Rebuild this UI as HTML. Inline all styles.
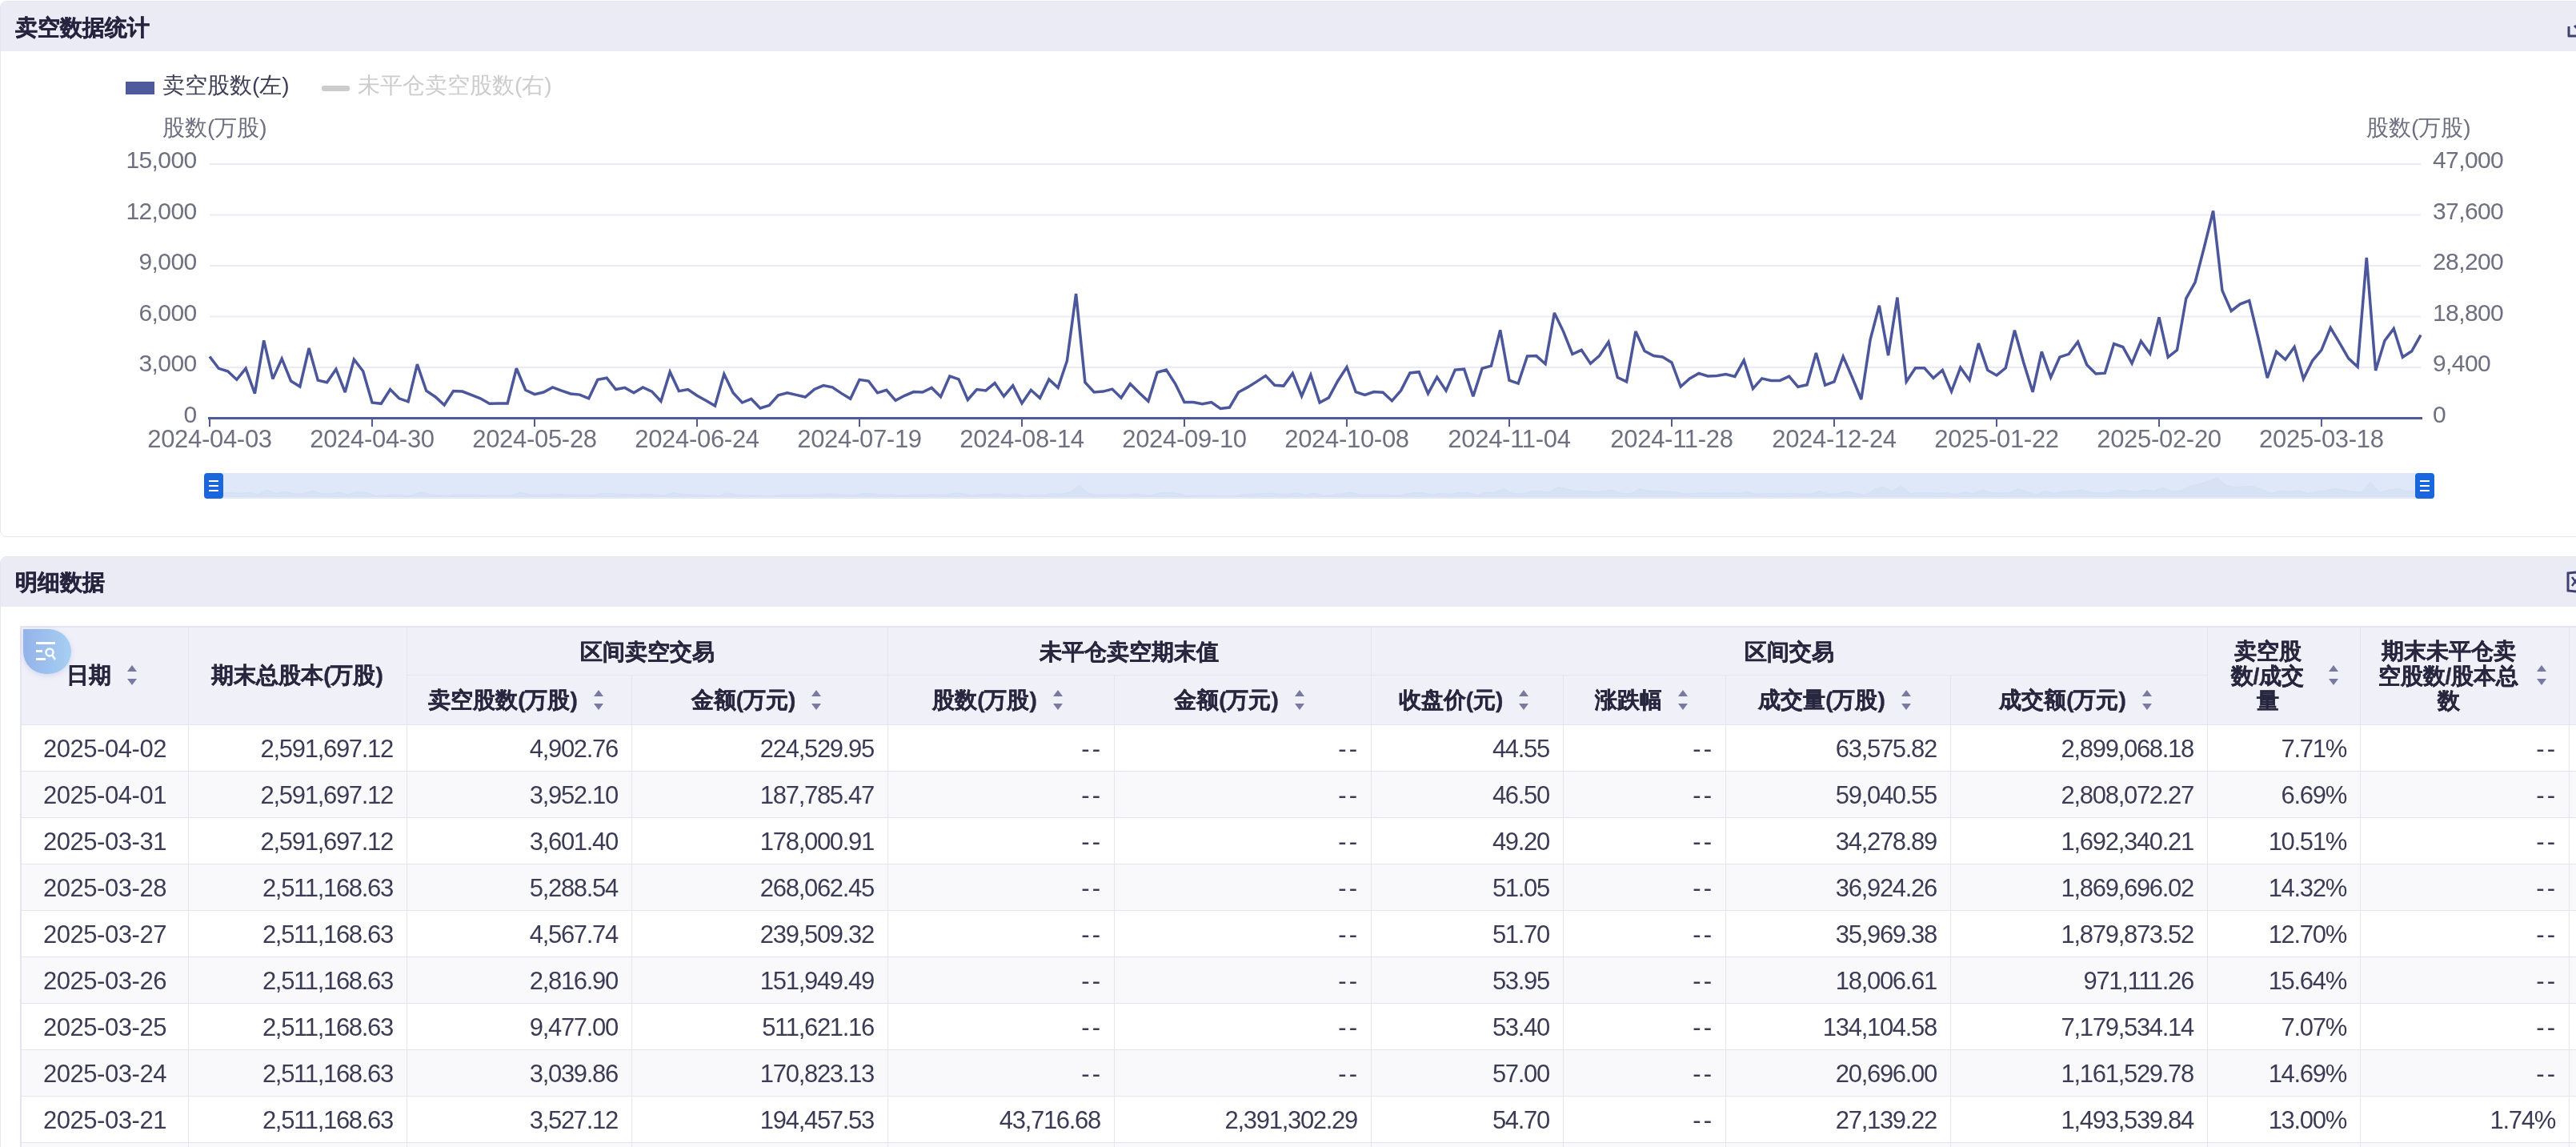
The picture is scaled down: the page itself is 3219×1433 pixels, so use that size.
<!DOCTYPE html>
<html><head><meta charset="utf-8">
<style>
html,body{margin:0;padding:0;background:#fff;}
body{width:3219px;height:1433px;overflow:hidden;position:relative;will-change:transform;font-family:"Liberation Sans",sans-serif;}
.panel{position:absolute;left:0;width:3260px;border:1px solid #e6e6f3;border-radius:8px;background:#fff;box-sizing:border-box;overflow:hidden}
.ph{position:absolute;left:0;top:0;width:100%;height:62px;background:#ebebf5}
.pt{position:absolute;left:19px;font-size:28px;font-weight:bold;color:#25253f;line-height:1;white-space:nowrap;-webkit-text-stroke:0.5px #25253f}
.yl{position:absolute;font-size:30px;letter-spacing:-0.6px;color:#6e7081;line-height:36px;white-space:nowrap;text-align:right;margin-right:-0.6px}
.yr{position:absolute;font-size:30px;letter-spacing:-0.6px;color:#6e7081;line-height:36px;white-space:nowrap}
.xl{position:absolute;width:200px;text-align:center;font-size:31px;letter-spacing:-0.3px;color:#6e7081;line-height:36px;white-space:nowrap}
.at{position:absolute;font-size:28px;color:#6e7081;line-height:1;white-space:nowrap}
.hl{position:absolute;height:1px;background:#e5e4f3}
.vl{position:absolute;width:1px;background:#e5e4f3}
.hc{position:absolute;display:flex;align-items:center;justify-content:center}
.ht{font-size:28px;font-weight:bold;color:#27273f;line-height:31px;text-align:center;-webkit-text-stroke:0.35px #27273f}
.gh{position:relative;top:2px}
.ml{display:inline-block;word-break:break-all;position:relative;top:1px}
.si{display:inline-block;position:relative;width:12px;height:25px;margin-left:20px;margin-right:8px}
.si i{position:absolute;left:0;width:0;height:0;border-left:6px solid transparent;border-right:6px solid transparent}
.si .up{top:0;border-bottom:8px solid #797a9f}
.si .dn{bottom:0;border-top:8px solid #797a9f}
.dc{position:absolute;height:58px;line-height:62px;color:#3b3b55;white-space:nowrap}
.dt{text-align:center;font-size:31px;letter-spacing:-0.45px}
.nm{text-align:right;font-size:31px;letter-spacing:-1.3px}
.dd{letter-spacing:3px}
</style></head><body>
<div class="panel" style="top:1px;height:670px">
  <div class="ph"></div>
</div>
<div class="pt" style="top:21px">卖空数据统计</div>
<svg width="40" height="40" style="position:absolute;left:3200px;top:22px"><path d="M10 11 V23 H26" fill="none" stroke="#3d4070" stroke-width="3" stroke-linejoin="round"/><path d="M17 10 L26 19" fill="none" stroke="#3d4070" stroke-width="3"/></svg>
<div style="position:absolute;left:157px;top:102px;width:36px;height:16px;background:#4e5a9c"></div>
<div class="at" style="left:203px;top:93px;color:#3e3e58">卖空股数(左)</div>
<div style="position:absolute;left:402px;top:107px;width:35px;height:7px;border-radius:3px;background:#cccccc"></div>
<div class="at" style="left:447px;top:93px;color:#cccccc">未平仓卖空股数(右)</div>
<div class="at" style="left:203px;top:146px">股数(万股)</div>
<div class="at" style="left:2957px;top:146px">股数(万股)</div>
<svg width="3219" height="680" style="position:absolute;left:0;top:0">
<line x1="262.0" y1="205" x2="3025.0" y2="205" stroke="#ebebf7" stroke-width="2"/>
<line x1="262.0" y1="268.5" x2="3025.0" y2="268.5" stroke="#ebebf7" stroke-width="2"/>
<line x1="262.0" y1="332" x2="3025.0" y2="332" stroke="#ebebf7" stroke-width="2"/>
<line x1="262.0" y1="395.5" x2="3025.0" y2="395.5" stroke="#ebebf7" stroke-width="2"/>
<line x1="262.0" y1="459" x2="3025.0" y2="459" stroke="#ebebf7" stroke-width="2"/>
<line x1="262.0" y1="522" x2="262.0" y2="533" stroke="#4e5a9a" stroke-width="2"/>
<line x1="465.0" y1="522" x2="465.0" y2="533" stroke="#4e5a9a" stroke-width="2"/>
<line x1="668.0" y1="522" x2="668.0" y2="533" stroke="#4e5a9a" stroke-width="2"/>
<line x1="871.0" y1="522" x2="871.0" y2="533" stroke="#4e5a9a" stroke-width="2"/>
<line x1="1074.0" y1="522" x2="1074.0" y2="533" stroke="#4e5a9a" stroke-width="2"/>
<line x1="1277.0" y1="522" x2="1277.0" y2="533" stroke="#4e5a9a" stroke-width="2"/>
<line x1="1480.0" y1="522" x2="1480.0" y2="533" stroke="#4e5a9a" stroke-width="2"/>
<line x1="1683.0" y1="522" x2="1683.0" y2="533" stroke="#4e5a9a" stroke-width="2"/>
<line x1="1886.0" y1="522" x2="1886.0" y2="533" stroke="#4e5a9a" stroke-width="2"/>
<line x1="2089.0" y1="522" x2="2089.0" y2="533" stroke="#4e5a9a" stroke-width="2"/>
<line x1="2292.0" y1="522" x2="2292.0" y2="533" stroke="#4e5a9a" stroke-width="2"/>
<line x1="2495.0" y1="522" x2="2495.0" y2="533" stroke="#4e5a9a" stroke-width="2"/>
<line x1="2698.0" y1="522" x2="2698.0" y2="533" stroke="#4e5a9a" stroke-width="2"/>
<line x1="2900.9" y1="522" x2="2900.9" y2="533" stroke="#4e5a9a" stroke-width="2"/>
<line x1="260.0" y1="522.5" x2="3027.0" y2="522.5" stroke="#4e5a9a" stroke-width="3"/>
<polyline points="262.0,445.5 273.3,460.3 284.6,463.8 295.8,474.3 307.1,460.3 318.4,491.7 329.7,425.4 340.9,473.4 352.2,448.1 363.5,476.0 374.8,483.0 386.1,435.0 397.3,475.1 408.6,477.7 419.9,461.2 431.2,490.0 442.4,449.0 453.7,463.8 465.0,503.0 476.3,504.3 487.6,486.5 498.8,497.8 510.1,501.8 521.4,455.1 532.7,488.2 543.9,495.7 555.2,506.0 566.5,488.6 577.8,489.1 589.0,493.4 600.3,497.8 611.6,504.3 622.9,503.9 634.2,503.9 645.4,460.3 656.7,487.3 668.0,492.6 679.3,490.0 690.5,483.9 701.8,488.2 713.1,492.0 724.4,493.1 735.7,497.8 746.9,474.3 758.2,472.2 769.5,486.5 780.8,484.4 792.0,490.8 803.3,483.9 814.6,489.1 825.9,501.3 837.2,464.7 848.4,488.6 859.7,486.5 871.0,494.3 882.3,500.4 893.5,507.0 904.8,467.3 916.1,490.8 927.4,503.0 938.7,498.3 949.9,510.0 961.2,506.5 972.5,493.8 983.8,490.8 995.0,493.4 1006.3,496.0 1017.6,486.5 1028.9,481.6 1040.2,483.9 1051.4,491.4 1062.7,498.3 1074.0,474.3 1085.3,476.0 1096.5,490.8 1107.8,487.3 1119.1,500.4 1130.4,494.3 1141.6,489.6 1152.9,490.0 1164.2,484.4 1175.5,495.7 1186.8,469.9 1198.0,473.9 1209.3,499.5 1220.6,486.5 1231.9,487.9 1243.1,478.6 1254.4,495.2 1265.7,481.6 1277.0,503.9 1288.3,487.3 1299.5,497.3 1310.8,473.9 1322.1,484.4 1333.4,450.7 1344.6,367.0 1355.9,477.7 1367.2,490.0 1378.5,489.1 1389.8,486.1 1401.0,496.9 1412.3,479.5 1423.6,490.8 1434.9,501.3 1446.1,465.2 1457.4,462.1 1468.7,479.5 1480.0,502.5 1491.3,502.5 1502.5,504.8 1513.8,502.5 1525.1,510.5 1536.4,509.1 1547.6,490.0 1558.9,483.9 1570.2,476.9 1581.5,469.4 1592.8,481.2 1604.0,482.1 1615.3,466.4 1626.6,494.8 1637.9,468.2 1649.1,503.0 1660.4,496.9 1671.7,476.0 1683.0,458.6 1694.2,489.6 1705.5,493.4 1716.8,489.6 1728.1,490.3 1739.4,500.8 1750.6,487.9 1761.9,465.9 1773.2,464.7 1784.5,491.7 1795.7,471.1 1807.0,488.2 1818.3,462.1 1829.6,461.2 1840.9,495.2 1852.1,460.3 1863.4,457.2 1874.7,412.4 1886.0,475.1 1897.2,479.1 1908.5,445.0 1919.8,444.6 1931.1,454.7 1942.4,390.9 1953.6,414.1 1964.9,442.5 1976.2,437.3 1987.5,454.2 1998.7,444.3 2010.0,427.2 2021.3,471.6 2032.6,476.9 2043.9,414.1 2055.1,438.5 2066.4,444.6 2077.7,446.0 2089.0,453.0 2100.2,483.0 2111.5,472.9 2122.8,466.4 2134.1,469.9 2145.4,469.4 2156.6,467.6 2167.9,470.4 2179.2,450.2 2190.5,485.6 2201.7,472.9 2213.0,475.4 2224.3,475.4 2235.6,470.2 2246.8,483.3 2258.1,480.7 2269.4,440.9 2280.7,481.2 2292.0,476.8 2303.2,445.4 2314.5,471.5 2325.8,499.0 2337.1,424.4 2348.3,381.8 2359.6,444.1 2370.9,371.6 2382.2,476.8 2393.5,459.8 2404.7,459.8 2416.0,472.3 2427.3,462.4 2438.6,489.1 2449.8,459.2 2461.1,474.9 2472.4,428.9 2483.7,462.4 2495.0,468.9 2506.2,459.8 2517.5,412.7 2528.8,453.2 2540.1,489.8 2551.3,439.3 2562.6,471.5 2573.9,446.1 2585.2,442.3 2596.5,427.0 2607.7,455.7 2619.0,467.0 2630.3,466.2 2641.6,429.6 2652.8,433.5 2664.1,453.9 2675.4,426.2 2686.7,441.9 2698.0,396.4 2709.2,446.1 2720.5,437.4 2731.8,372.8 2743.1,352.5 2754.3,309.3 2765.6,263.5 2776.9,362.9 2788.2,388.5 2799.4,379.9 2810.7,375.5 2822.0,422.5 2833.3,472.2 2844.6,439.3 2855.8,449.2 2867.1,433.5 2878.4,473.3 2889.7,450.5 2900.9,437.4 2912.2,409.5 2923.5,428.3 2934.8,447.8 2946.1,458.2 2957.3,321.9 2968.6,462.9 2979.9,425.8 2991.2,410.6 3002.4,446.3 3013.7,438.8 3025.0,418.7" fill="none" stroke="#4b579a" stroke-width="3.5" stroke-linejoin="miter" stroke-miterlimit="3"/>
<rect x="266" y="591" width="2764" height="32" fill="#dfe8f8"/>
<polygon points="266,621 266.0,613.9 277.3,615.2 288.6,615.6 299.8,616.5 311.1,615.2 322.4,618.1 333.7,612.0 345.0,616.5 356.3,614.1 367.5,616.7 378.8,617.3 390.1,612.9 401.4,616.6 412.7,616.8 423.9,615.3 435.2,618.0 446.5,614.2 457.8,615.6 469.1,619.2 480.4,619.3 491.6,617.7 502.9,618.7 514.2,619.1 525.5,614.8 536.8,617.8 548.0,618.5 559.3,619.5 570.6,617.9 581.9,617.9 593.2,618.3 604.4,618.7 615.7,619.3 627.0,619.3 638.3,619.3 649.6,615.2 660.9,617.7 672.1,618.2 683.4,618.0 694.7,617.4 706.0,617.8 717.3,618.2 728.5,618.3 739.8,618.7 751.1,616.5 762.4,616.3 773.7,617.7 785.0,617.5 796.2,618.1 807.5,617.4 818.8,617.9 830.1,619.0 841.4,615.6 852.6,617.9 863.9,617.7 875.2,618.4 886.5,619.0 897.8,619.6 909.1,615.9 920.3,618.1 931.6,619.2 942.9,618.8 954.2,619.8 965.5,619.5 976.7,618.3 988.0,618.1 999.3,618.3 1010.6,618.5 1021.9,617.7 1033.2,617.2 1044.4,617.4 1055.7,618.1 1067.0,618.8 1078.3,616.5 1089.6,616.7 1100.8,618.1 1112.1,617.7 1123.4,619.0 1134.7,618.4 1146.0,618.0 1157.2,618.0 1168.5,617.5 1179.8,618.5 1191.1,616.1 1202.4,616.5 1213.7,618.9 1224.9,617.7 1236.2,617.8 1247.5,616.9 1258.8,618.5 1270.1,617.2 1281.3,619.3 1292.6,617.7 1303.9,618.7 1315.2,616.5 1326.5,617.5 1337.8,614.3 1349.0,606.6 1360.3,616.8 1371.6,618.0 1382.9,617.9 1394.2,617.6 1405.4,618.6 1416.7,617.0 1428.0,618.1 1439.3,619.0 1450.6,615.7 1461.9,615.4 1473.1,617.0 1484.4,619.1 1495.7,619.1 1507.0,619.4 1518.3,619.1 1529.5,619.9 1540.8,619.8 1552.1,618.0 1563.4,617.4 1574.7,616.8 1586.0,616.1 1597.2,617.2 1608.5,617.3 1619.8,615.8 1631.1,618.4 1642.4,616.0 1653.6,619.2 1664.9,618.6 1676.2,616.7 1687.5,615.1 1698.8,618.0 1710.0,618.3 1721.3,618.0 1732.6,618.0 1743.9,619.0 1755.2,617.8 1766.5,615.8 1777.7,615.6 1789.0,618.1 1800.3,616.2 1811.6,617.8 1822.9,615.4 1834.1,615.3 1845.4,618.5 1856.7,615.2 1868.0,614.9 1879.3,610.8 1890.6,616.6 1901.8,617.0 1913.1,613.8 1924.4,613.8 1935.7,614.7 1947.0,608.8 1958.2,611.0 1969.5,613.6 1980.8,613.1 1992.1,614.7 2003.4,613.8 2014.7,612.2 2025.9,616.3 2037.2,616.8 2048.5,611.0 2059.8,613.2 2071.1,613.8 2082.3,613.9 2093.6,614.6 2104.9,617.3 2116.2,616.4 2127.5,615.8 2138.8,616.1 2150.0,616.1 2161.3,615.9 2172.6,616.2 2183.9,614.3 2195.2,617.6 2206.4,616.4 2217.7,616.6 2229.0,616.6 2240.3,616.2 2251.6,617.4 2262.8,617.1 2274.1,613.4 2285.4,617.2 2296.7,616.8 2308.0,613.9 2319.3,616.3 2330.5,618.8 2341.8,611.9 2353.1,608.0 2364.4,613.7 2375.7,607.0 2386.9,616.8 2398.2,615.2 2409.5,615.2 2420.8,616.3 2432.1,615.4 2443.4,617.9 2454.6,615.1 2465.9,616.6 2477.2,612.3 2488.5,615.4 2499.8,616.0 2511.0,615.2 2522.3,610.8 2533.6,614.6 2544.9,618.0 2556.2,613.3 2567.5,616.3 2578.7,613.9 2590.0,613.6 2601.3,612.2 2612.6,614.8 2623.9,615.9 2635.1,615.8 2646.4,612.4 2657.7,612.8 2669.0,614.6 2680.3,612.1 2691.6,613.5 2702.8,609.3 2714.1,613.9 2725.4,613.1 2736.7,607.1 2748.0,605.2 2759.2,601.2 2770.5,597.0 2781.8,606.2 2793.1,608.6 2804.4,607.8 2815.6,607.4 2826.9,611.7 2838.2,616.3 2849.5,613.3 2860.8,614.2 2872.1,612.8 2883.3,616.4 2894.6,614.3 2905.9,613.1 2917.2,610.5 2928.5,612.3 2939.7,614.1 2951.0,615.0 2962.3,602.4 2973.6,615.5 2984.9,612.0 2996.2,610.6 3007.4,613.9 3018.7,613.2 3030.0,611.4 3030,621" fill="#d7e2f5" stroke="#d5e0f4" stroke-width="1"/>
<rect x="266" y="621" width="2764" height="2" fill="#e2eaf8"/>
<rect x="255" y="591" width="24" height="32" rx="4" fill="#1a66dc"/>
<rect x="261" y="600" width="12" height="2" fill="#fff"/>
<rect x="261" y="606" width="12" height="2" fill="#fff"/>
<rect x="261" y="612" width="12" height="2" fill="#fff"/>
<rect x="3018" y="591" width="24" height="32" rx="4" fill="#1a66dc"/>
<rect x="3024" y="600" width="12" height="2" fill="#fff"/>
<rect x="3024" y="606" width="12" height="2" fill="#fff"/>
<rect x="3024" y="612" width="12" height="2" fill="#fff"/>
</svg>
<div class="yl" style="top:182.0px;right:2974px">15,000</div>
<div class="yl" style="top:245.5px;right:2974px">12,000</div>
<div class="yl" style="top:309.0px;right:2974px">9,000</div>
<div class="yl" style="top:372.5px;right:2974px">6,000</div>
<div class="yl" style="top:436.0px;right:2974px">3,000</div>
<div class="yl" style="top:499.5px;right:2974px">0</div>
<div class="yr" style="top:182.0px;left:3040px">47,000</div>
<div class="yr" style="top:245.5px;left:3040px">37,600</div>
<div class="yr" style="top:309.0px;left:3040px">28,200</div>
<div class="yr" style="top:372.5px;left:3040px">18,800</div>
<div class="yr" style="top:436.0px;left:3040px">9,400</div>
<div class="yr" style="top:499.5px;left:3040px">0</div>
<div class="xl" style="left:162.0px;top:531px">2024-04-03</div>
<div class="xl" style="left:365.0px;top:531px">2024-04-30</div>
<div class="xl" style="left:568.0px;top:531px">2024-05-28</div>
<div class="xl" style="left:771.0px;top:531px">2024-06-24</div>
<div class="xl" style="left:974.0px;top:531px">2024-07-19</div>
<div class="xl" style="left:1177.0px;top:531px">2024-08-14</div>
<div class="xl" style="left:1380.0px;top:531px">2024-09-10</div>
<div class="xl" style="left:1583.0px;top:531px">2024-10-08</div>
<div class="xl" style="left:1786.0px;top:531px">2024-11-04</div>
<div class="xl" style="left:1989.0px;top:531px">2024-11-28</div>
<div class="xl" style="left:2192.0px;top:531px">2024-12-24</div>
<div class="xl" style="left:2395.0px;top:531px">2025-01-22</div>
<div class="xl" style="left:2598.0px;top:531px">2025-02-20</div>
<div class="xl" style="left:2800.9px;top:531px">2025-03-18</div>
<div class="panel" style="top:695px;height:800px">
  <div class="ph"></div>
</div>
<div class="pt" style="top:714px">明细数据</div>
<svg width="40" height="40" style="position:absolute;left:3200px;top:708px"><path d="M9 8 L30 6 V32 L9 30 Z" fill="none" stroke="#3d4070" stroke-width="3"/><path d="M14 13 L22 24 M22 13 L14 24" stroke="#3d4070" stroke-width="2.5"/></svg>
<div style="position:absolute;left:27px;top:782px;width:3200px;height:123px;background:#f0f0f9"></div>
<div style="position:absolute;left:27px;top:905px;width:3200px;height:58px;background:#ffffff"></div>
<div style="position:absolute;left:27px;top:963px;width:3200px;height:58px;background:#f9f9fc"></div>
<div style="position:absolute;left:27px;top:1021px;width:3200px;height:58px;background:#ffffff"></div>
<div style="position:absolute;left:27px;top:1079px;width:3200px;height:58px;background:#f9f9fc"></div>
<div style="position:absolute;left:27px;top:1137px;width:3200px;height:58px;background:#ffffff"></div>
<div style="position:absolute;left:27px;top:1195px;width:3200px;height:58px;background:#f9f9fc"></div>
<div style="position:absolute;left:27px;top:1253px;width:3200px;height:58px;background:#ffffff"></div>
<div style="position:absolute;left:27px;top:1311px;width:3200px;height:58px;background:#f9f9fc"></div>
<div style="position:absolute;left:27px;top:1369px;width:3200px;height:58px;background:#ffffff"></div>
<div style="position:absolute;left:27px;top:1427px;width:3200px;height:58px;background:#f9f9fc"></div>
<div class="hl" style="top:782px;left:25px;width:3200px;height:2px"></div>
<div class="hl" style="top:905px;left:25px;width:3200px"></div>
<div class="hl" style="top:963px;left:25px;width:3200px"></div>
<div class="hl" style="top:1021px;left:25px;width:3200px"></div>
<div class="hl" style="top:1079px;left:25px;width:3200px"></div>
<div class="hl" style="top:1137px;left:25px;width:3200px"></div>
<div class="hl" style="top:1195px;left:25px;width:3200px"></div>
<div class="hl" style="top:1253px;left:25px;width:3200px"></div>
<div class="hl" style="top:1311px;left:25px;width:3200px"></div>
<div class="hl" style="top:1369px;left:25px;width:3200px"></div>
<div class="hl" style="top:1427px;left:25px;width:3200px"></div>
<div class="hl" style="top:843px;left:508px;width:601px"></div>
<div class="hl" style="top:843px;left:1109px;width:604px"></div>
<div class="hl" style="top:843px;left:1713px;width:1045px"></div>
<div class="vl" style="left:25px;top:782px;width:2px;height:700px"></div>
<div class="vl" style="left:235px;top:782px;height:700px"></div>
<div class="vl" style="left:508px;top:782px;height:700px"></div>
<div class="vl" style="left:789px;top:843px;height:700px"></div>
<div class="vl" style="left:1109px;top:782px;height:700px"></div>
<div class="vl" style="left:1392px;top:843px;height:700px"></div>
<div class="vl" style="left:1713px;top:782px;height:700px"></div>
<div class="vl" style="left:1953px;top:843px;height:700px"></div>
<div class="vl" style="left:2156px;top:843px;height:700px"></div>
<div class="vl" style="left:2437px;top:843px;height:700px"></div>
<div class="vl" style="left:2758px;top:782px;height:700px"></div>
<div class="vl" style="left:2949px;top:782px;height:700px"></div>
<div class="vl" style="left:3210px;top:782px;height:700px"></div>
<div class="hc" style="left:27px;top:782px;width:208px;height:123px"><span class="ht">日期</span><span class="si"><i class="up"></i><i class="dn"></i></span></div>
<div class="hc" style="left:235px;top:782px;width:273px;height:123px"><span class="ht">期末总股本(万股)</span></div>
<div class="hc" style="left:508px;top:782px;width:601px;height:61px"><span class="ht gh">区间卖空交易</span></div>
<div class="hc" style="left:1109px;top:782px;width:604px;height:61px"><span class="ht gh">未平仓卖空期末值</span></div>
<div class="hc" style="left:1713px;top:782px;width:1045px;height:61px"><span class="ht gh">区间交易</span></div>
<div class="hc" style="left:508px;top:843px;width:281px;height:62px"><span class="ht">卖空股数(万股)</span><span class="si"><i class="up"></i><i class="dn"></i></span></div>
<div class="hc" style="left:789px;top:843px;width:320px;height:62px"><span class="ht">金额(万元)</span><span class="si"><i class="up"></i><i class="dn"></i></span></div>
<div class="hc" style="left:1109px;top:843px;width:283px;height:62px"><span class="ht">股数(万股)</span><span class="si"><i class="up"></i><i class="dn"></i></span></div>
<div class="hc" style="left:1392px;top:843px;width:321px;height:62px"><span class="ht">金额(万元)</span><span class="si"><i class="up"></i><i class="dn"></i></span></div>
<div class="hc" style="left:1713px;top:843px;width:240px;height:62px"><span class="ht">收盘价(元)</span><span class="si"><i class="up"></i><i class="dn"></i></span></div>
<div class="hc" style="left:1953px;top:843px;width:203px;height:62px"><span class="ht">涨跌幅</span><span class="si"><i class="up"></i><i class="dn"></i></span></div>
<div class="hc" style="left:2156px;top:843px;width:281px;height:62px"><span class="ht">成交量(万股)</span><span class="si"><i class="up"></i><i class="dn"></i></span></div>
<div class="hc" style="left:2437px;top:843px;width:321px;height:62px"><span class="ht">成交额(万元)</span><span class="si"><i class="up"></i><i class="dn"></i></span></div>
<div class="hc" style="left:2758px;top:782px;width:191px;height:123px"><span class="ht ml" style="width:112px">卖空股数/成交量</span><span class="si"><i class="up"></i><i class="dn"></i></span></div>
<div class="hc" style="left:2949px;top:782px;width:261px;height:123px"><span class="ht ml" style="width:180px">期末未平仓卖空股数/股本总数</span><span class="si"><i class="up"></i><i class="dn"></i></span></div>
<div class="dc dt" style="left:27px;top:905px;width:208px">2025-04-02</div>
<div class="dc nm" style="left:235px;top:905px;width:256px">2,591,697.12</div>
<div class="dc nm" style="left:508px;top:905px;width:264px">4,902.76</div>
<div class="dc nm" style="left:789px;top:905px;width:303px">224,529.95</div>
<div class="dc nm dd" style="left:1109px;top:905px;width:269px">--</div>
<div class="dc nm dd" style="left:1392px;top:905px;width:307px">--</div>
<div class="dc nm" style="left:1713px;top:905px;width:223px">44.55</div>
<div class="dc nm dd" style="left:1953px;top:905px;width:189px">--</div>
<div class="dc nm" style="left:2156px;top:905px;width:264px">63,575.82</div>
<div class="dc nm" style="left:2437px;top:905px;width:304px">2,899,068.18</div>
<div class="dc nm" style="left:2758px;top:905px;width:174px">7.71%</div>
<div class="dc nm dd" style="left:2949px;top:905px;width:247px">--</div>
<div class="dc dt" style="left:27px;top:963px;width:208px">2025-04-01</div>
<div class="dc nm" style="left:235px;top:963px;width:256px">2,591,697.12</div>
<div class="dc nm" style="left:508px;top:963px;width:264px">3,952.10</div>
<div class="dc nm" style="left:789px;top:963px;width:303px">187,785.47</div>
<div class="dc nm dd" style="left:1109px;top:963px;width:269px">--</div>
<div class="dc nm dd" style="left:1392px;top:963px;width:307px">--</div>
<div class="dc nm" style="left:1713px;top:963px;width:223px">46.50</div>
<div class="dc nm dd" style="left:1953px;top:963px;width:189px">--</div>
<div class="dc nm" style="left:2156px;top:963px;width:264px">59,040.55</div>
<div class="dc nm" style="left:2437px;top:963px;width:304px">2,808,072.27</div>
<div class="dc nm" style="left:2758px;top:963px;width:174px">6.69%</div>
<div class="dc nm dd" style="left:2949px;top:963px;width:247px">--</div>
<div class="dc dt" style="left:27px;top:1021px;width:208px">2025-03-31</div>
<div class="dc nm" style="left:235px;top:1021px;width:256px">2,591,697.12</div>
<div class="dc nm" style="left:508px;top:1021px;width:264px">3,601.40</div>
<div class="dc nm" style="left:789px;top:1021px;width:303px">178,000.91</div>
<div class="dc nm dd" style="left:1109px;top:1021px;width:269px">--</div>
<div class="dc nm dd" style="left:1392px;top:1021px;width:307px">--</div>
<div class="dc nm" style="left:1713px;top:1021px;width:223px">49.20</div>
<div class="dc nm dd" style="left:1953px;top:1021px;width:189px">--</div>
<div class="dc nm" style="left:2156px;top:1021px;width:264px">34,278.89</div>
<div class="dc nm" style="left:2437px;top:1021px;width:304px">1,692,340.21</div>
<div class="dc nm" style="left:2758px;top:1021px;width:174px">10.51%</div>
<div class="dc nm dd" style="left:2949px;top:1021px;width:247px">--</div>
<div class="dc dt" style="left:27px;top:1079px;width:208px">2025-03-28</div>
<div class="dc nm" style="left:235px;top:1079px;width:256px">2,511,168.63</div>
<div class="dc nm" style="left:508px;top:1079px;width:264px">5,288.54</div>
<div class="dc nm" style="left:789px;top:1079px;width:303px">268,062.45</div>
<div class="dc nm dd" style="left:1109px;top:1079px;width:269px">--</div>
<div class="dc nm dd" style="left:1392px;top:1079px;width:307px">--</div>
<div class="dc nm" style="left:1713px;top:1079px;width:223px">51.05</div>
<div class="dc nm dd" style="left:1953px;top:1079px;width:189px">--</div>
<div class="dc nm" style="left:2156px;top:1079px;width:264px">36,924.26</div>
<div class="dc nm" style="left:2437px;top:1079px;width:304px">1,869,696.02</div>
<div class="dc nm" style="left:2758px;top:1079px;width:174px">14.32%</div>
<div class="dc nm dd" style="left:2949px;top:1079px;width:247px">--</div>
<div class="dc dt" style="left:27px;top:1137px;width:208px">2025-03-27</div>
<div class="dc nm" style="left:235px;top:1137px;width:256px">2,511,168.63</div>
<div class="dc nm" style="left:508px;top:1137px;width:264px">4,567.74</div>
<div class="dc nm" style="left:789px;top:1137px;width:303px">239,509.32</div>
<div class="dc nm dd" style="left:1109px;top:1137px;width:269px">--</div>
<div class="dc nm dd" style="left:1392px;top:1137px;width:307px">--</div>
<div class="dc nm" style="left:1713px;top:1137px;width:223px">51.70</div>
<div class="dc nm dd" style="left:1953px;top:1137px;width:189px">--</div>
<div class="dc nm" style="left:2156px;top:1137px;width:264px">35,969.38</div>
<div class="dc nm" style="left:2437px;top:1137px;width:304px">1,879,873.52</div>
<div class="dc nm" style="left:2758px;top:1137px;width:174px">12.70%</div>
<div class="dc nm dd" style="left:2949px;top:1137px;width:247px">--</div>
<div class="dc dt" style="left:27px;top:1195px;width:208px">2025-03-26</div>
<div class="dc nm" style="left:235px;top:1195px;width:256px">2,511,168.63</div>
<div class="dc nm" style="left:508px;top:1195px;width:264px">2,816.90</div>
<div class="dc nm" style="left:789px;top:1195px;width:303px">151,949.49</div>
<div class="dc nm dd" style="left:1109px;top:1195px;width:269px">--</div>
<div class="dc nm dd" style="left:1392px;top:1195px;width:307px">--</div>
<div class="dc nm" style="left:1713px;top:1195px;width:223px">53.95</div>
<div class="dc nm dd" style="left:1953px;top:1195px;width:189px">--</div>
<div class="dc nm" style="left:2156px;top:1195px;width:264px">18,006.61</div>
<div class="dc nm" style="left:2437px;top:1195px;width:304px">971,111.26</div>
<div class="dc nm" style="left:2758px;top:1195px;width:174px">15.64%</div>
<div class="dc nm dd" style="left:2949px;top:1195px;width:247px">--</div>
<div class="dc dt" style="left:27px;top:1253px;width:208px">2025-03-25</div>
<div class="dc nm" style="left:235px;top:1253px;width:256px">2,511,168.63</div>
<div class="dc nm" style="left:508px;top:1253px;width:264px">9,477.00</div>
<div class="dc nm" style="left:789px;top:1253px;width:303px">511,621.16</div>
<div class="dc nm dd" style="left:1109px;top:1253px;width:269px">--</div>
<div class="dc nm dd" style="left:1392px;top:1253px;width:307px">--</div>
<div class="dc nm" style="left:1713px;top:1253px;width:223px">53.40</div>
<div class="dc nm dd" style="left:1953px;top:1253px;width:189px">--</div>
<div class="dc nm" style="left:2156px;top:1253px;width:264px">134,104.58</div>
<div class="dc nm" style="left:2437px;top:1253px;width:304px">7,179,534.14</div>
<div class="dc nm" style="left:2758px;top:1253px;width:174px">7.07%</div>
<div class="dc nm dd" style="left:2949px;top:1253px;width:247px">--</div>
<div class="dc dt" style="left:27px;top:1311px;width:208px">2025-03-24</div>
<div class="dc nm" style="left:235px;top:1311px;width:256px">2,511,168.63</div>
<div class="dc nm" style="left:508px;top:1311px;width:264px">3,039.86</div>
<div class="dc nm" style="left:789px;top:1311px;width:303px">170,823.13</div>
<div class="dc nm dd" style="left:1109px;top:1311px;width:269px">--</div>
<div class="dc nm dd" style="left:1392px;top:1311px;width:307px">--</div>
<div class="dc nm" style="left:1713px;top:1311px;width:223px">57.00</div>
<div class="dc nm dd" style="left:1953px;top:1311px;width:189px">--</div>
<div class="dc nm" style="left:2156px;top:1311px;width:264px">20,696.00</div>
<div class="dc nm" style="left:2437px;top:1311px;width:304px">1,161,529.78</div>
<div class="dc nm" style="left:2758px;top:1311px;width:174px">14.69%</div>
<div class="dc nm dd" style="left:2949px;top:1311px;width:247px">--</div>
<div class="dc dt" style="left:27px;top:1369px;width:208px">2025-03-21</div>
<div class="dc nm" style="left:235px;top:1369px;width:256px">2,511,168.63</div>
<div class="dc nm" style="left:508px;top:1369px;width:264px">3,527.12</div>
<div class="dc nm" style="left:789px;top:1369px;width:303px">194,457.53</div>
<div class="dc nm" style="left:1109px;top:1369px;width:266px">43,716.68</div>
<div class="dc nm" style="left:1392px;top:1369px;width:304px">2,391,302.29</div>
<div class="dc nm" style="left:1713px;top:1369px;width:223px">54.70</div>
<div class="dc nm dd" style="left:1953px;top:1369px;width:189px">--</div>
<div class="dc nm" style="left:2156px;top:1369px;width:264px">27,139.22</div>
<div class="dc nm" style="left:2437px;top:1369px;width:304px">1,493,539.84</div>
<div class="dc nm" style="left:2758px;top:1369px;width:174px">13.00%</div>
<div class="dc nm" style="left:2949px;top:1369px;width:244px">1.74%</div>
<div style="position:absolute;left:29px;top:786px;width:60px;height:56px;border-radius:0 30px 30px 30px;background:linear-gradient(90deg,#93b3ea,#a7cff3);box-shadow:0 2px 6px rgba(120,140,200,0.25)"></div>
<svg width="30" height="30" style="position:absolute;left:43px;top:800px"><g fill="#fff"><rect x="2" y="2" width="24" height="3"/><rect x="2" y="12" width="8" height="3"/><rect x="2" y="22" width="12" height="3"/></g><circle cx="19" cy="15" r="4.5" fill="none" stroke="#fff" stroke-width="2.5"/><line x1="22" y1="18" x2="26" y2="24" stroke="#fff" stroke-width="2.5"/></svg>
</body></html>
